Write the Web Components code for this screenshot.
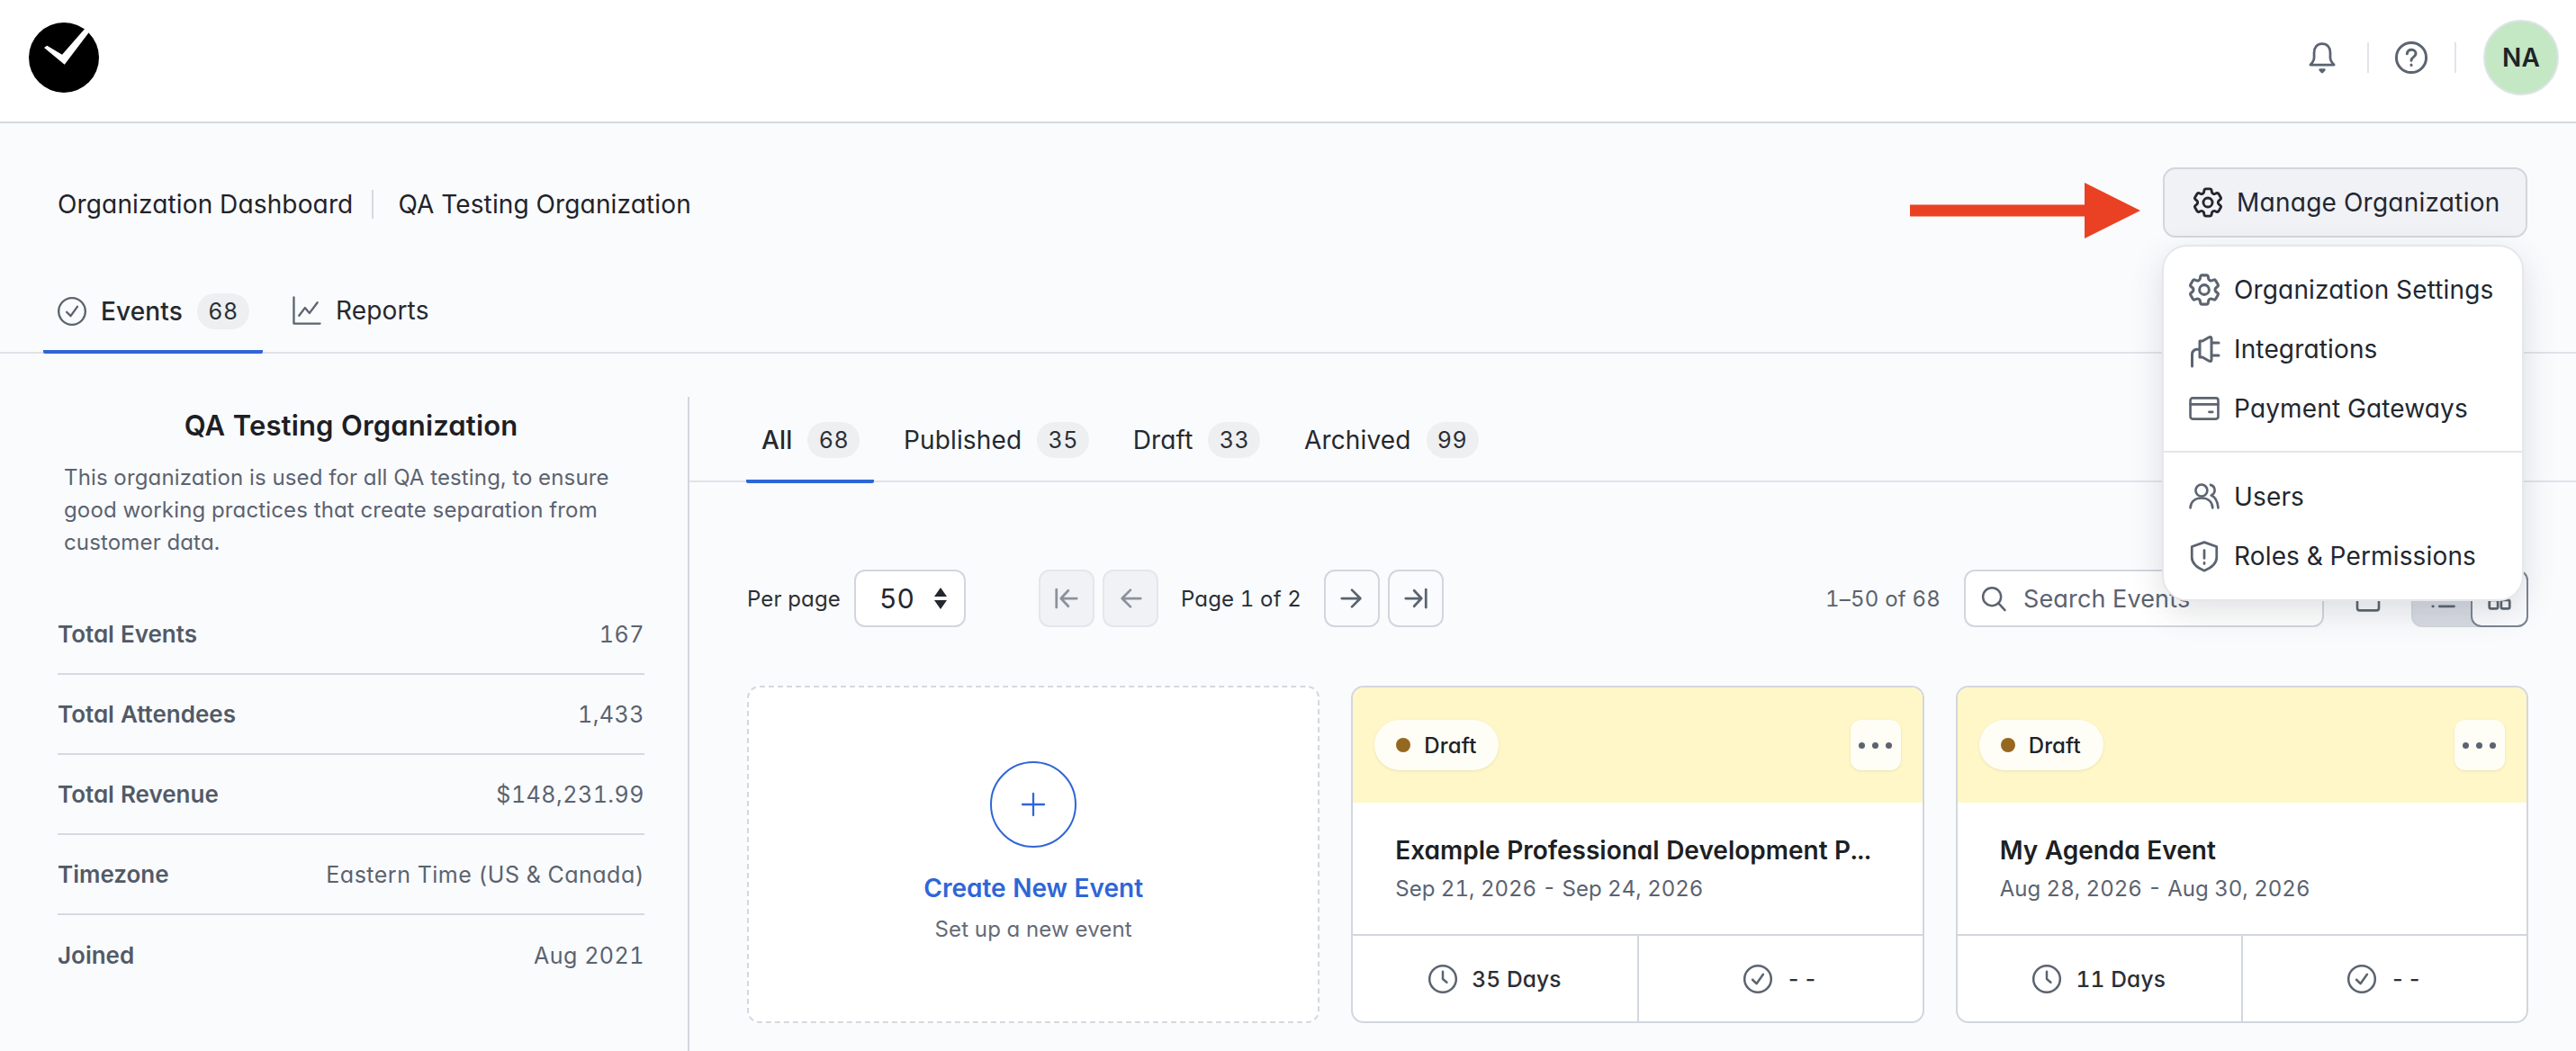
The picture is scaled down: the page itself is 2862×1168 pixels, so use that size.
<!DOCTYPE html>
<html lang="en">
<head>
<meta charset="utf-8">
<title>Organization Dashboard</title>
<style>
  html, body { margin: 0; height: 100%; }
  body {
    height: 1168px;
    overflow: hidden;
    background: #fafbfd;
    color: #1f2329;
    font-family: Inter, "Liberation Sans", sans-serif;
    font-feature-settings: "cv11";
    font-variant-numeric: tabular-nums;
    font-size: 28px;
    letter-spacing: .15px;
  }
</style>
</head>
<body>
  <app-header></app-header>
  <title-bar></title-bar>
  <main-tabs>
    <main-tab icon="check" count="68" active>Events</main-tab>
    <main-tab icon="chart">Reports</main-tab>
  </main-tabs>
  <page-body>
    <org-sidebar slot="side">
      <stat-row label="Total Events">167</stat-row>
      <stat-row label="Total Attendees">1,433</stat-row>
      <stat-row label="Total Revenue">$148,231.99</stat-row>
      <stat-row label="Timezone">Eastern Time (US &amp; Canada)</stat-row>
      <stat-row label="Joined" last>Aug 2021</stat-row>
    </org-sidebar>
    <status-tabs>
      <status-tab count="68" active>All</status-tab>
      <status-tab count="35">Published</status-tab>
      <status-tab count="33">Draft</status-tab>
      <status-tab count="99">Archived</status-tab>
    </status-tabs>
    <list-toolbar></list-toolbar>
    <event-grid>
      <create-card></create-card>
      <event-card name="Example Professional Development P..." dates="Sep 21, 2026 - Sep 24, 2026" days="35 Days"></event-card>
      <event-card name="My Agenda Event" dates="Aug 28, 2026 - Aug 30, 2026" days="11 Days"></event-card>
    </event-grid>
  </page-body>

<script>
// icon table: body is the svg content, view is the crop so the glyph fills its box
const ICONS = {
  gear: { view: '2.5 2.5 19 19', body: `<path d="M9.594 3.94c.09-.542.56-.94 1.11-.94h2.593c.55 0 1.02.398 1.11.94l.213 1.281c.063.374.313.686.645.87.074.04.147.083.22.127.325.196.72.257 1.075.124l1.217-.456a1.125 1.125 0 0 1 1.37.49l1.296 2.247a1.125 1.125 0 0 1-.26 1.431l-1.003.827c-.293.241-.438.613-.43.992a7.723 7.723 0 0 1 0 .255c-.008.378.137.75.43.991l1.004.827c.424.35.534.955.26 1.43l-1.298 2.247a1.125 1.125 0 0 1-1.369.491l-1.217-.456c-.355-.133-.75-.072-1.076.124a6.47 6.47 0 0 1-.22.128c-.331.183-.581.495-.644.869l-.213 1.281c-.09.543-.56.94-1.11.94h-2.594c-.55 0-1.019-.398-1.11-.94l-.213-1.281c-.062-.374-.312-.686-.644-.87a6.52 6.52 0 0 1-.22-.127c-.325-.196-.72-.257-1.076-.124l-1.217.456a1.125 1.125 0 0 1-1.369-.49l-1.297-2.247a1.125 1.125 0 0 1 .26-1.431l1.004-.827c.292-.24.437-.613.43-.991a6.932 6.932 0 0 1 0-.255c.007-.38-.138-.751-.43-.992l-1.004-.827a1.125 1.125 0 0 1-.26-1.43l1.297-2.247a1.125 1.125 0 0 1 1.37-.491l1.216.456c.356.133.751.072 1.076-.124.072-.044.146-.086.22-.128.332-.183.582-.495.644-.869l.214-1.28Z"/><circle cx="12" cy="12" r="3"/>` },
  plug: { view: '10 5 34 34', body: `<g stroke-width="3"><path d="M13.500 41V28q0-6 7-6h1.500M22 13h3l7-4q3-1.500 3 1.500v23q0 3-3 1.500l-7-4h-3zM35 15h8M35 29h8"/></g>` },
  card: { view: '1 1 22 22', body: `<rect x="2" y="4.500" width="20" height="15" rx="1.600"/><path d="M2 9h20M15.500 14.500h2.500"/>` },
  users: { view: '1 1 22 22', body: `<circle cx="10" cy="7.500" r="4.200"/><path d="M2 20c.3-4.500 3.600-7 8-7s7.700 2.500 8 7M16.500 3.500c2 .5 3 2 3 4 0 1.500-1 2.800-2.500 3.500 2.800 1 4.500 4 5 9"/>` },
  shield: { view: '1.500 1.500 21 21', body: `<path d="M12 2.500l8.500 3v7.500c0 4-3.500 7-8.500 9-5-2-8.500-5-8.500-9V5.500z"/><path d="M12 8v5.500M12 16.500v.8"/>` },
  check: { view: '1.200 1.200 21.600 21.600', body: `<circle cx="12" cy="12" r="10"/><path d="M8 12.500l3 3 5-7"/>` },
  chart: { view: '1 1 22 22', body: `<path d="M2 2v20h20M6 16l4.500-6 3.500 4 6-8"/>` },
  clock: { view: '1.200 1.200 21.600 21.600', body: `<circle cx="12" cy="12" r="10"/><path d="M12 6.500V12l3 2.500"/>` },
  help: { view: '.6 .6 22.800 22.800', body: `<circle cx="12" cy="12" r="10.500"/><path d="M9 9.300c.3-1.800 1.600-2.800 3.200-2.800 1.700 0 3 1.100 3 2.700 0 2.400-3.200 2.400-3.200 4.800M12 17v.4"/>` },
  bell: { view: '2.500 1 19 22', body: `<path d="M12 2c-3.600 0-5.800 2.800-5.800 6.300v3.700c0 2.200-1.200 3.700-2.700 5.200h17c-1.500-1.500-2.700-3-2.700-5.200V8.300C17.800 4.800 15.600 2 12 2z"/><path d="M10.500 20.800h3L12 22.300z" fill="currentColor"/>` },
  search: { body: `<circle cx="10.500" cy="10.500" r="8"/><path d="M16.500 16.500l5.500 6"/>` },
  first: { body: `<path d="M3 4v16M21 12H8M13.500 5L7 12l6.500 7"/>` },
  prev: { body: `<path d="M21 12H5M12 4.500L4.500 12l7.500 7.500"/>` },
  next: { body: `<path d="M3 12h16M12 4.500l7.500 7.500-7.500 7.500"/>` },
  last: { body: `<path d="M21 4v16M3 12h13M10.500 5l6.500 7-6.500 7"/>` },
  plus: { body: `<path d="M12 3v18M3 12h18"/>` },
  calendar: { body: `<rect x="3" y="4" width="18" height="18" rx="2"/><path d="M3 9.500h18M8 2v4M16 2v4"/>` },
  list: { body: `<path d="M9 5h13M9 12h13M9 19h13M3 5h.5M3 12h.5M3 19h.5"/>` },
  grid: { body: `<rect x="3" y="3" width="7.500" height="7.500" rx="1.500"/><rect x="13.500" y="3" width="7.500" height="7.500" rx="1.500"/><rect x="3" y="13.500" width="7.500" height="7.500" rx="1.500"/><rect x="13.500" y="13.500" width="7.500" height="7.500" rx="1.500"/>` }
};

class UiIcon extends HTMLElement {
  connectedCallback() {
    const size = this.getAttribute('size') || 32;
    const stroke = this.getAttribute('stroke') || 2;
    const icon = ICONS[this.getAttribute('name')];
    this.attachShadow({ mode: 'open' }).innerHTML = `
      <style>
        :host { display: inline-flex; flex: none; width: ${size}px; height: ${size}px; }
        svg { width: 100%; height: 100%; display: block; overflow: visible; }
      </style>
      <svg viewBox="${icon.view || '0 0 24 24'}" fill="none" stroke="currentColor" stroke-width="${stroke}"
           stroke-linecap="round" stroke-linejoin="round">${icon.body}</svg>`;
  }
}
customElements.define('ui-icon', UiIcon);

class CountBadge extends HTMLElement {
  constructor() {
    super();
    this.attachShadow({ mode: 'open' }).innerHTML = `
      <style>
        :host {
          display: inline-flex; align-items: center; justify-content: center;
          width: 58px; height: 40px; border-radius: 20px;
          background: #eeeff1; color: #2b2f36; font-size: 25px; font-weight: 400; letter-spacing: .5px;
        }
      </style><slot></slot>`;
  }
}
customElements.define('count-badge', CountBadge);

class AppHeader extends HTMLElement {
  constructor() {
    super();
    this.attachShadow({ mode: 'open' }).innerHTML = `
      <style>
        :host {
          display: flex; align-items: center; justify-content: space-between;
          box-sizing: border-box; height: 137px; padding: 0 19px 7px 32px;
          background: #fff; border-bottom: 2px solid #d3d9e2;
        }
        .logo { width: 78px; height: 78px; display: block; overflow: visible; }
        .right { display: flex; align-items: center; color: #5b6470; }
        .sep { width: 2px; height: 34px; background: #e1e4e9; }
        .avatar {
          box-sizing: border-box; width: 84px; height: 84px; border-radius: 50%;
          background: #c3e8c3; border: 2px solid #dfe3e6; color: #1f2329;
          display: flex; align-items: center; justify-content: center;
          font-size: 28px; font-weight: 600;
        }
        .bell { margin-right: 33px; }
        .help { margin: 0 30px 0 29px; }
        .last { margin-right: 30px; }
      </style>
      <svg class="logo" viewBox="0 0 78 78">
        <circle cx="39" cy="39" r="39" fill="#000"/>
        <polygon points="17,28 20.300,25.700 37,35.700 63,6 67,10.700 39.700,46.700" fill="#fff"/>
      </svg>
      <div class="right">
        <ui-icon class="bell" name="bell" size="34" stroke="1.800"></ui-icon>
        <div class="sep"></div>
        <ui-icon class="help" name="help" size="36" stroke="1.900"></ui-icon>
        <div class="sep last"></div>
        <div class="avatar">NA</div>
      </div>`;
  }
}
customElements.define('app-header', AppHeader);

class MenuItem extends HTMLElement {
  constructor() {
    super();
    this.attachShadow({ mode: 'open' }).innerHTML = `
      <style>
        :host {
          display: flex; align-items: center; gap: 16px; height: 66px; padding: 0 28px;
          color: #23272f; font-size: 28px; white-space: nowrap;
        }
        ui-icon { color: #5b6470; }
      </style>
      <ui-icon name="${this.getAttribute('icon')}" size="34" stroke="1.700"></ui-icon>
      <slot></slot>`;
  }
}
customElements.define('menu-item', MenuItem);

class OrgMenu extends HTMLElement {
  constructor() {
    super();
    this.attachShadow({ mode: 'open' }).innerHTML = `
      <style>
        :host {
          position: absolute; z-index: 5; top: calc(100% + 8px); left: -1px;
          box-sizing: border-box; width: 402px; padding: 15px 0;
          background: #fff; border: 2px solid #e5e7eb; border-radius: 28px;
          box-shadow: 0 12px 36px rgba(60, 66, 80, .16);
        }
        hr { border: 0; height: 2px; background: #e3e5ea; margin: 14px 0 16px; }
      </style>
      <menu-item icon="gear">Organization Settings</menu-item>
      <menu-item icon="plug">Integrations</menu-item>
      <menu-item icon="card">Payment Gateways</menu-item>
      <hr>
      <menu-item icon="users">Users</menu-item>
      <menu-item icon="shield">Roles &amp; Permissions</menu-item>`;
  }
}
customElements.define('org-menu', OrgMenu);

class TitleBar extends HTMLElement {
  constructor() {
    super();
    this.attachShadow({ mode: 'open' }).innerHTML = `
      <style>
        :host {
          display: flex; align-items: flex-start; justify-content: space-between;
          box-sizing: border-box; height: 163px; padding: 49px 54px 0 64px;
        }
        .crumbs { display: flex; align-items: center; height: 78px; padding-top: 2px; font-size: 28px; color: #1f2329; }
        .crumbs i { width: 2px; height: 32px; background: #d6d9df; margin: 0 27px 0 21px; }
        .wrap { position: relative; }
        button {
          display: flex; align-items: center; gap: 16px; box-sizing: border-box;
          width: 405px; height: 78px; padding: 0 32px;
          background: #f0f2f6; border: 2px solid #d2d6dd; border-radius: 14px;
          color: #23272f; font: inherit; font-size: 28px; letter-spacing: .25px; white-space: nowrap;
        }
        .arrow { position: absolute; right: calc(100% + 25px); top: 17px; width: 256px; height: 62px; }
      </style>
      <div class="crumbs"><span>Organization Dashboard</span><i></i><span>QA Testing Organization</span></div>
      <div class="wrap">
        <svg class="arrow" viewBox="0 0 256 62"><polygon points="0,24.500 194,24.500 194,0 256,31 194,62 194,37.500 0,37.500" fill="#ea4125"/></svg>
        <button><ui-icon name="gear" size="32" stroke="1.700"></ui-icon>Manage Organization</button>
        <org-menu></org-menu>
      </div>`;
  }
}
customElements.define('title-bar', TitleBar);

class MainTabs extends HTMLElement {
  constructor() {
    super();
    this.attachShadow({ mode: 'open' }).innerHTML = `
      <style>
        :host {
          display: flex; gap: 17px; box-sizing: border-box; height: 93px;
          padding-left: 48px; border-bottom: 2px solid #e1e3ea;
        }
      </style><slot></slot>`;
  }
}
customElements.define('main-tabs', MainTabs);

class MainTab extends HTMLElement {
  constructor() {
    super();
    const count = this.getAttribute('count');
    this.attachShadow({ mode: 'open' }).innerHTML = `
      <style>
        :host {
          display: flex; align-items: center; gap: 16px; box-sizing: border-box;
          height: 93px; padding: 0 15px 3px 16px; font-size: 28px; color: #25292f;
        }
        :host([active]) { border-bottom: 4px solid #2f66d6; border-radius: 0 0 2px 2px; padding-top: 2px; padding-bottom: 0; font-weight: 500; }
        ui-icon { color: #5b6470; }
      </style>
      <ui-icon name="${this.getAttribute('icon')}" size="32" stroke="1.600"></ui-icon>
      <slot></slot>
      ${count ? `<count-badge>${count}</count-badge>` : ''}`;
  }
}
customElements.define('main-tab', MainTab);

class PageBody extends HTMLElement {
  constructor() {
    super();
    this.attachShadow({ mode: 'open' }).innerHTML = `
      <style>
        :host { display: flex; padding-top: 48px; }
        .side { box-sizing: border-box; width: 766px; flex: none; border-right: 2px solid #d3d6de; min-height: 740px; }
        .main { flex: 1; min-width: 0; }
      </style>
      <div class="side"><slot name="side"></slot></div>
      <div class="main"><slot></slot></div>`;
  }
}
customElements.define('page-body', PageBody);

class OrgSidebar extends HTMLElement {
  constructor() {
    super();
    this.attachShadow({ mode: 'open' }).innerHTML = `
      <style>
        :host { display: block; padding: 12px 48px 0 64px; }
        h2 { margin: 0 0 20px; font-size: 31px; line-height: 40px; font-weight: 600; text-align: center; color: #1d1f24; }
        p { margin: 0 0 40px; padding-left: 7px; font-size: 24px; line-height: 36px; color: #5b6370; }
      </style>
      <h2>QA Testing Organization</h2>
      <p>This organization is used for all QA testing, to ensure good working practices that create separation from customer data.</p>
      <slot></slot>`;
  }
}
customElements.define('org-sidebar', OrgSidebar);

class StatRow extends HTMLElement {
  constructor() {
    super();
    this.attachShadow({ mode: 'open' }).innerHTML = `
      <style>
        :host {
          display: flex; align-items: center; justify-content: space-between;
          box-sizing: border-box; height: 89px; border-bottom: 2px solid #d6d9e1;
          font-size: 25px; color: #5b6370; letter-spacing: .5px;
        }
        :host([last]) { border-bottom: 0; }
        b { font-size: 26px; font-weight: 600; letter-spacing: 0; color: #525a67; }
      </style>
      <b>${this.getAttribute('label')}</b><span><slot></slot></span>`;
  }
}
customElements.define('stat-row', StatRow);

class StatusTabs extends HTMLElement {
  constructor() {
    super();
    this.attachShadow({ mode: 'open' }).innerHTML = `
      <style>
        :host {
          display: flex; gap: 15.500px; box-sizing: border-box; height: 95px;
          padding-left: 63px; border-bottom: 2px solid #e1e3ea;
        }
      </style><slot></slot>`;
  }
}
customElements.define('status-tabs', StatusTabs);

class StatusTab extends HTMLElement {
  constructor() {
    super();
    this.attachShadow({ mode: 'open' }).innerHTML = `
      <style>
        :host {
          display: flex; align-items: center; gap: 17px; box-sizing: border-box;
          height: 96px; padding: 0 16px 0 17px; font-size: 28px; color: #25292f;
        }
        :host([active]) { border-bottom: 4px solid #2f66d6; border-radius: 0 0 2px 2px; padding-top: 4px; font-weight: 500; }
      </style>
      <slot></slot>
      <count-badge>${this.getAttribute('count')}</count-badge>`;
  }
}
customElements.define('status-tab', StatusTab);

class PagerButton extends HTMLElement {
  constructor() {
    super();
    this.attachShadow({ mode: 'open' }).innerHTML = `
      <style>
        :host {
          display: flex; align-items: center; justify-content: center; box-sizing: border-box;
          width: 62px; height: 64px; border: 2px solid #d2d6dd; border-radius: 12px; color: #5b6470;
        }
        :host([disabled]) { background: #f1f2f5; border-color: #e4e6ea; color: #8b929e; }
      </style>
      <ui-icon name="${this.getAttribute('icon')}" size="30" stroke="2.200"></ui-icon>`;
  }
}
customElements.define('pager-button', PagerButton);

class ListToolbar extends HTMLElement {
  constructor() {
    super();
    this.attachShadow({ mode: 'open' }).innerHTML = `
      <style>
        :host {
          display: flex; align-items: center; justify-content: space-between;
          height: 64px; margin: 97px 53px 65px 64px; font-size: 24px; color: #2b2f36;
        }
        .group { display: flex; align-items: center; }
        .select {
          display: flex; align-items: center; justify-content: space-between; box-sizing: border-box;
          width: 124px; height: 64px; margin: 0 81px 0 15px; padding: 0 18px 0 26px;
          background: #fff; border: 2px solid #d2d6dd; border-radius: 12px; font-size: 30px; color: #23272f;
        }
        .select svg { width: 16px; height: 26px; display: block; }
        .pager { margin-left: 9px; }
        .label { margin: 0 25px; }
        .count { color: #5b6370; letter-spacing: .2px; margin-right: 26px; }
        .search {
          display: flex; align-items: center; gap: 18px; box-sizing: border-box;
          width: 400px; height: 64px; padding: 0 16px; background: #fff;
          border: 2px solid #d2d6dd; border-radius: 12px; color: #5b6370; font-size: 27px;
        }
        .cal { color: #5b6470; margin: 0 32px 0 33px; }
        .toggle { display: flex; width: 130px; height: 64px; box-sizing: border-box; background: #d8dbe3; border: 2px solid #d2d6dd; border-radius: 12px; color: #5b6470; }
        .toggle span { flex: 1; display: flex; align-items: center; justify-content: center; }
        .toggle .on { margin: -2px; height: 64px; flex: 0 0 64px; box-sizing: border-box; background: #fafbfd; border: 2px solid #7b8494; border-radius: 12px; }
      </style>
      <div class="group">
        <span>Per page</span>
        <div class="select">50
          <svg viewBox="0 0 16 26"><path d="M8 1l7 10H1zM8 25l7-10H1z" fill="#23272f"/></svg>
        </div>
        <pager-button icon="first" disabled></pager-button>
        <pager-button class="pager" icon="prev" disabled></pager-button>
        <span class="label">Page 1 of 2</span>
        <pager-button icon="next"></pager-button>
        <pager-button class="pager" icon="last"></pager-button>
      </div>
      <div class="group">
        <span class="count">1–50 of 68</span>
        <div class="search"><ui-icon name="search" size="30" stroke="2"></ui-icon>Search Events</div>
        <ui-icon class="cal" name="calendar" size="32" stroke="2"></ui-icon>
        <div class="toggle">
          <span><ui-icon name="list" size="30" stroke="2.200"></ui-icon></span>
          <span class="on"><ui-icon name="grid" size="30" stroke="2.200"></ui-icon></span>
        </div>
      </div>`;
  }
}
customElements.define('list-toolbar', ListToolbar);

class EventGrid extends HTMLElement {
  constructor() {
    super();
    this.attachShadow({ mode: 'open' }).innerHTML = `
      <style>
        :host { display: grid; grid-template-columns: repeat(3, 1fr); gap: 35px; margin: 0 53px 0 64px; }
      </style><slot></slot>`;
  }
}
customElements.define('event-grid', EventGrid);

class CreateCard extends HTMLElement {
  constructor() {
    super();
    this.attachShadow({ mode: 'open' }).innerHTML = `
      <style>
        :host {
          display: flex; flex-direction: column; align-items: center; box-sizing: border-box;
          height: 375px; padding-top: 82px; background: #fff;
          border: 2px dashed #d5d8df; border-radius: 14px;
        }
        .plus {
          box-sizing: border-box; width: 96px; height: 96px; border-radius: 50%; border: 2px solid #2f66d6;
          display: flex; align-items: center; justify-content: center; color: #2f66d6;
        }
        b { margin-top: 28px; font-size: 28px; line-height: 34px; font-weight: 600; letter-spacing: 0; color: #2f66d6; }
        span { margin-top: 14px; font-size: 24px; line-height: 30px; color: #646b77; }
      </style>
      <div class="plus"><ui-icon name="plus" size="32" stroke="1.700"></ui-icon></div>
      <b>Create New Event</b>
      <span>Set up a new event</span>`;
  }
}
customElements.define('create-card', CreateCard);

class EventCard extends HTMLElement {
  constructor() {
    super();
    this.attachShadow({ mode: 'open' }).innerHTML = `
      <style>
        :host {
          display: flex; flex-direction: column; box-sizing: border-box; height: 375px; overflow: hidden;
          background: #fff; border: 2px solid #d2d6dd; border-radius: 14px; min-width: 0;
        }
        .top {
          display: flex; align-items: center; justify-content: space-between; flex: none;
          height: 128px; padding: 0 24px; box-sizing: border-box; background: #fff7c8;
        }
        .pill {
          display: flex; align-items: center; gap: 15px; height: 56px; padding: 0 25px 0 24px;
          border-radius: 28px; background: #fffef6; font-size: 24px; font-weight: 500; color: #1f2329;
          box-shadow: 0 1px 3px rgba(120, 110, 60, .15);
        }
        .pill i { width: 16px; height: 16px; border-radius: 50%; background: #96681f; }
        .dots {
          display: flex; align-items: center; justify-content: center; gap: 8px; width: 56px; height: 56px;
          border-radius: 12px; background: #fffef6; box-shadow: 0 1px 3px rgba(120, 110, 60, .15);
        }
        .dots i { width: 7px; height: 7px; border-radius: 50%; background: #5b6470; }
        .mid { flex: 1; padding: 35px 40px 0 47px; min-width: 0; }
        h3 { margin: 0 0 8px; font-size: 28px; line-height: 36px; font-weight: 600; letter-spacing: 0; color: #1d1f24; white-space: nowrap; }
        .dates { font-size: 24px; line-height: 34px; color: #5b6370; letter-spacing: 0; }
        .foot { display: flex; flex: none; height: 97px; box-sizing: border-box; border-top: 2px solid #d2d6dd; }
        .foot div {
          flex: 1; display: flex; align-items: center; justify-content: center; gap: 16px;
          font-size: 24.500px; font-weight: 500; color: #2b2f36; word-spacing: -6px;
        }
        .foot div + div { border-left: 2px solid #d2d6dd; }
        .foot span { word-spacing: 0; }
        ui-icon { color: #5b6470; }
      </style>
      <div class="top">
        <div class="pill"><i></i>Draft</div>
        <div class="dots"><i></i><i></i><i></i></div>
      </div>
      <div class="mid">
        <h3>${this.getAttribute('name')}</h3>
        <div class="dates">${this.getAttribute('dates')}</div>
      </div>
      <div class="foot">
        <div><ui-icon name="clock" size="32" stroke="1.700"></ui-icon><span>${this.getAttribute('days')}</span></div>
        <div><ui-icon name="check" size="32" stroke="1.700"></ui-icon><span style="word-spacing:-4px">- -</span></div>
      </div>`;
  }
}
customElements.define('event-card', EventCard);
</script>
</body>
</html>
